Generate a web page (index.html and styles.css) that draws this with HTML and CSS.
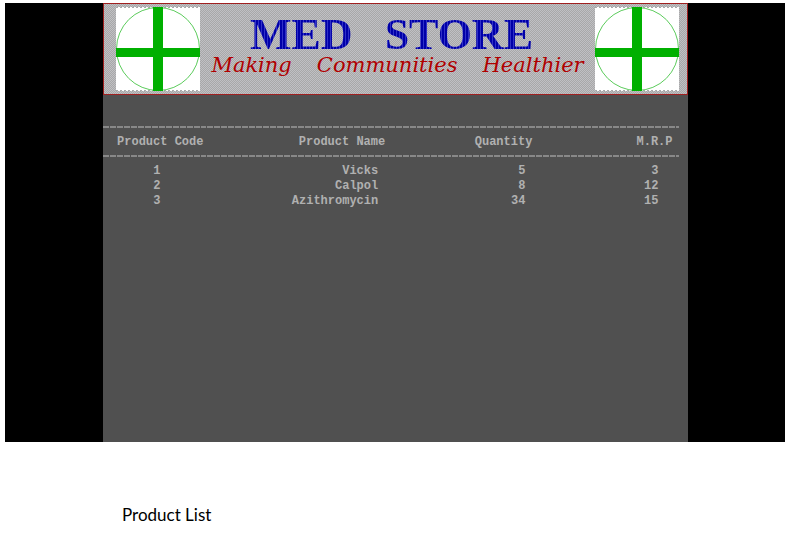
FILE: index.html
```html
<!DOCTYPE html>
<html lang="en">
<head>
<meta charset="utf-8">
<title>Product List</title>
<link rel="stylesheet" href="styles.css">
</head>
<body>
<main class="screen">
  <div class="console">
    <header class="banner">
      <svg class="logo" viewBox="0 0 84 84" aria-hidden="true">
        <rect width="84" height="84" fill="#fff"/>
        <path d="M0 .5H84M0 83.5H84" stroke="#aaa" stroke-dasharray="2 2"/>
        <circle cx="42" cy="42" r="41.5" fill="none" stroke="#5ccc5c"/>
        <path d="M37 0H47V84H37ZM0 41H84V50H0Z" fill="#00b000"/>
      </svg>
      <div class="brand">
        <h1 class="name"><span>MED</span> <span>STORE</span></h1>
        <p class="tagline"><span>Making</span> <span>Communities</span> <span>Healthier</span></p>
      </div>
      <svg class="logo" viewBox="0 0 84 84" aria-hidden="true">
        <rect width="84" height="84" fill="#fff"/>
        <path d="M0 .5H84M0 83.5H84" stroke="#aaa" stroke-dasharray="2 2"/>
        <circle cx="42" cy="42" r="41.5" fill="none" stroke="#5ccc5c"/>
        <path d="M37 0H47V84H37ZM0 41H84V50H0Z" fill="#00b000"/>
      </svg>
    </header>
    <table class="products">
      <thead>
        <tr>
          <th class="code" scope="col">Product Code</th>
          <th class="product" scope="col">Product Name</th>
          <th class="quantity" scope="col">Quantity</th>
          <th class="price" scope="col">M.R.P</th>
        </tr>
      </thead>
      <tbody>
        <tr><td class="code">1</td><td>Vicks</td><td>5</td><td class="price">3</td></tr>
        <tr><td class="code">2</td><td>Calpol</td><td>8</td><td class="price">12</td></tr>
        <tr><td class="code">3</td><td>Azithromycin</td><td>34</td><td class="price">15</td></tr>
      </tbody>
    </table>
  </div>
</main>
<p class="caption">Product List</p>
</body>
</html>
```
FILE: styles.css
```css
* {
  box-sizing: border-box;
}

body {
  margin: 3px 7px 0 5px;
  background: #fff;
}

.screen {
  display: flex;
  justify-content: center;
  min-height: calc(80vh + 1px);
  background: #000;
}

.console {
  width: 75%;
  background: #505050;
}

.banner {
  display: flex;
  align-items: flex-start;
  justify-content: space-between;
  padding: 3px 7px 3px 12px;
  border: 1px solid #a02020;
  background: repeating-conic-gradient(#a8a8a8 0 25%, #c0c0c4 0 50%) 0 0 / 2px 2px;
}

.logo {
  flex: none;
  width: 84px;
  height: 84px;
}

.brand {
  padding-top: 8px;
}

.name {
  display: flex;
  justify-content: center;
  gap: 32px;
  margin: 0;
  padding-right: 12px;
  font: bold 44px/40px "Liberation Serif", serif;
  color: transparent;
  background: repeating-linear-gradient(90deg, #0000a8 0 2px, #3030c8 2px 3px);
  background-clip: text;
}

.tagline {
  display: flex;
  justify-content: center;
  gap: 25px;
  margin: 0;
  font: italic 21px/20px "DejaVu Serif", serif;
  color: #b00000;
}

.products {
  width: calc(100% - 8px);
  margin-top: 31px;
  border-collapse: collapse;
  table-layout: fixed;
  font: bold 12px/15px "Liberation Mono", monospace;
  color: #b0b0b0;
}

.products th,
.products td {
  padding: 0 7px 0 0;
  text-align: right;
  white-space: nowrap;
}

.products thead {
  background:
    repeating-linear-gradient(90deg, #888 0 6px, #505050 6px 7px) top / 100% 2px no-repeat,
    repeating-linear-gradient(90deg, #888 0 6px, #505050 6px 7px) bottom / 100% 2px no-repeat;
}

.products th {
  padding: 9px 0 7px;
}

.products tbody::before {
  content: "";
  display: block;
  height: 7px;
}

.products .code {
  width: 17.5%;
}

.products .product {
  width: 31.5%;
}

.products .quantity {
  width: 25.5%;
}

.products th.price {
  padding-right: 7px;
}

.products td.code {
  padding-right: 43px;
}

.products td.price {
  padding-right: 21px;
}

.caption {
  margin: 61px 0 0 117px;
  font: 17px/24px Lato, sans-serif;
  color: #000;
}
```
